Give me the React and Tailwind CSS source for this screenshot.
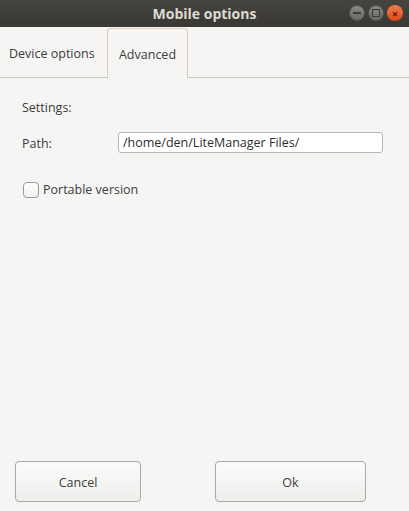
import React from 'react';

// GTK-style dialog: title bar, notebook tabs, form, bottom buttons.
export default function App() {
  return (
    <div
      className="w-[409px] h-[511px] flex flex-col bg-[#f5f5f4] text-[#3c3c3c] overflow-hidden"
      style={{ fontFamily: '"Open Sans", "Noto Sans", sans-serif' }}
    >
      {/* Title bar */}
      <div className="relative h-[27px] shrink-0 flex items-center justify-center bg-gradient-to-b from-[#45443f] to-[#393834]">
        <span className="text-[14px] font-bold text-[#dfdbd2]">Mobile options</span>
        <div className="absolute right-[6px] top-[5px] flex gap-[3px]">
          <WinBtn>
            <div className="w-[8px] h-[2px] bg-[#3c3b37]" />
          </WinBtn>
          <WinBtn>
            <div className="w-[8px] h-[8px] border-[1.5px] border-[#3c3b37]" />
          </WinBtn>
          <div className="w-[16px] h-[16px] rounded-full bg-gradient-to-b from-[#f47a4b] to-[#df4a16] flex items-center justify-center text-[#5a1a06] text-[11px] font-bold leading-none">
            ×
          </div>
        </div>
      </div>

      {/* Tabs */}
      <div className="h-[51px] shrink-0 flex items-end border-b border-[#cdc7c2]">
        <div className="h-[49px] w-[107px] pl-[9px] pt-[4px] flex items-center text-[12.5px]">Device options</div>
        <div className="h-[50px] -mb-px w-[81px] pt-[4px] flex items-center justify-center text-[12.5px] border border-b-0 border-[#e8c6b8] rounded-t-[4px] bg-[#f5f5f4]">
          Advanced
        </div>
      </div>

      {/* Content */}
      <div className="flex-1 flex flex-col px-[22px] pt-[21px] text-[12.5px]">
        <div className="h-[18px] flex items-center">Settings:</div>
        <div className="mt-[15px] flex items-center">
          <span className="w-[96px] pt-[3px]">Path:</span>
          <div className="w-[265px] h-[21px] flex items-center px-[4px] pt-[1px] bg-white border border-[#b6b6b3] rounded-[3px] text-[#2e2e2e]">
            /home/den/LiteManager Files/
          </div>
        </div>
        <div className="mt-[26px] flex items-center gap-[4px]">
          <div className="ml-[1px] w-[16px] h-[16px] rounded-[4px] border border-[#9a9a97] bg-gradient-to-b from-white to-[#f0f0ef]" />
          <span className="pt-[1px]">Portable version</span>
        </div>

        <div className="flex-1" />

        <div className="flex pb-[9px] -ml-[7px]">
          <button className="w-[126px] h-[41px] pt-[3px] rounded-[4px] border border-[#a8a8a5] bg-gradient-to-b from-[#fbfbfb] to-[#eeeeec] text-[12.5px] text-[#3c3c3c]">
            Cancel
          </button>
          <button className="ml-[74px] w-[151px] h-[41px] pt-[3px] rounded-[4px] border border-[#a8a8a5] bg-gradient-to-b from-[#fbfbfb] to-[#eeeeec] text-[12.5px] text-[#3c3c3c]">
            Ok
          </button>
        </div>
      </div>
    </div>
  );
}

function WinBtn({ children }) {
  return (
    <div className="w-[16px] h-[16px] rounded-full bg-gradient-to-b from-[#8a8985] to-[#6a6965] border border-[#55544f] flex items-center justify-center">
      {children}
    </div>
  );
}
